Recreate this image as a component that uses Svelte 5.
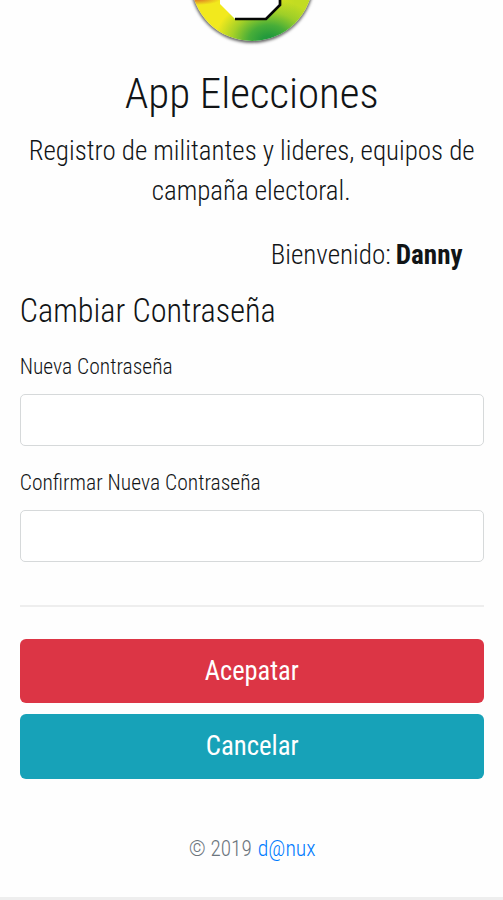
<script>
  let password = $state('');
  let confirmation = $state('');
</script>

{#snippet line(text, width, size, height, baseline, weight = 300)}
  <svg class="line" {width} {height} role="img" aria-label={text}>
    <text x="-0.3" y={baseline} font-size={size} font-weight={weight} textLength={width} lengthAdjust="spacingAndGlyphs">{text}</text>
  </svg>
{/snippet}

<div class="page">
  <header>
    <div class="logo">
      <div class="disc"></div>
      <svg class="mark" width="128" height="50" viewBox="189 0 128 50" aria-hidden="true">
        <path d="M221 0V4L236 19H267L281 5V0Z" fill="#fff" />
        <path d="M236 19H267L281 5V0" fill="none" stroke="#060806" stroke-width="2.7" />
      </svg>
    </div>
    <h1>{@render line('App Elecciones', 254, 42, 60, 47.5)}</h1>
    <p>
      {@render line('Registro de militantes y lideres, equipos de', 446, 27, 40, 29.5)}
      {@render line('campaña electoral.', 199, 27, 40, 29.5)}
    </p>
  </header>

  <main>
    <div class="welcome">
      {@render line('Bienvenido:', 120, 27, 40, 27.5)}
      {@render line('Danny', 67, 27, 40, 27.5, 700)}
    </div>
    <h2>{@render line('Cambiar Contraseña', 256, 32.5, 44, 31.5)}</h2>
    <form onsubmit={(event) => event.preventDefault()}>
      <label for="password">{@render line('Nueva Contraseña', 153, 22, 34, 21.2)}</label>
      <input id="password" type="password" bind:value={password} />
      <label for="confirmation">{@render line('Confirmar Nueva Contraseña', 241, 22, 34, 21.2)}</label>
      <input id="confirmation" type="password" bind:value={confirmation} />
      <hr />
      <div class="actions">
        <button class="accept" type="submit">{@render line('Acepatar', 94, 27, 40, 29.3, 400)}</button>
        <button class="cancel" type="button">{@render line('Cancelar', 93, 27, 40, 29.3, 400)}</button>
      </div>
    </form>
  </main>

  <footer>
    {@render line('© 2019', 63, 22, 32, 24)}
    <a href="#danux">{@render line('d@nux', 58, 22, 32, 24)}</a>
  </footer>
</div>

<style>
  .page {
    box-sizing: border-box;
    display: flex;
    flex-direction: column;
    width: 503px;
    height: 900px;
    overflow: hidden;
    background: #fefefe;
    border-bottom: 3px solid #eee;
    color: #111416;
    font-family: 'Roboto Condensed', Roboto, sans-serif;
    font-stretch: 75%;
  }
  .line {
    display: block;
    flex: none;
    overflow: visible;
  }
  .line text {
    fill: currentColor;
  }
  h1, h2, p {
    margin: 0;
  }
  header {
    display: flex;
    flex-direction: column;
    align-items: center;
  }
  .logo {
    position: relative;
    width: 128px;
    height: 60px;
    overflow: hidden;
  }
  .disc {
    position: absolute;
    left: 3px;
    top: -81px;
    width: 122px;
    height: 122px;
    border-radius: 50%;
    background:
      radial-gradient(ellipse 24px 6px at 6px 80px, #df8524 20%, transparent),
      radial-gradient(ellipse 54px 42px at 78px 122px, #239a3c 12%, #48ae38 38%, rgb(145 202 42 / 0.8) 68%, transparent),
      linear-gradient(90deg, #f2e91d 40%, #c2dc22 85%);
    box-shadow: 0 1px 3px 1px #666;
  }
  .mark {
    position: absolute;
    left: 0;
    top: 0;
  }
  p {
    display: flex;
    flex-direction: column;
    align-items: center;
    padding-top: 10px;
  }
  main {
    padding: 0 19px 0 20px;
  }
  .welcome {
    display: flex;
    justify-content: flex-end;
    gap: 5px;
    padding: 26px 21px 0 0;
  }
  h2 {
    margin-top: 14px;
  }
  form {
    display: flex;
    flex-direction: column;
  }
  label {
    margin-top: 19px;
  }
  input {
    box-sizing: border-box;
    width: 100%;
    height: 52px;
    margin: 7px 0 4px;
    padding: 8px 16px;
    border: 1.5px solid #d6d9da;
    border-radius: 5px;
    background: #fff;
    font: 27px Roboto, sans-serif;
  }
  #confirmation {
    margin-bottom: 0;
  }
  hr {
    width: 100%;
    height: 2px;
    margin: 43px 0 31.5px;
    border: 0;
    background: #eee;
  }
  .actions {
    display: flex;
    flex-direction: column;
    gap: 11px;
  }
  button {
    display: flex;
    align-items: center;
    justify-content: center;
    height: 64.5px;
    padding: 0;
    border: 0;
    border-radius: 6px;
    color: #fff;
    font: inherit;
    font-stretch: 75%;
  }
  .accept {
    background: #dc3545;
  }
  .cancel {
    background: #17a2b8;
  }
  footer {
    display: flex;
    justify-content: center;
    gap: 6px;
    padding: 53.5px 0 0 1px;
    color: #6c757d;
  }
  a {
    color: #007bff;
    text-decoration: none;
  }
</style>
